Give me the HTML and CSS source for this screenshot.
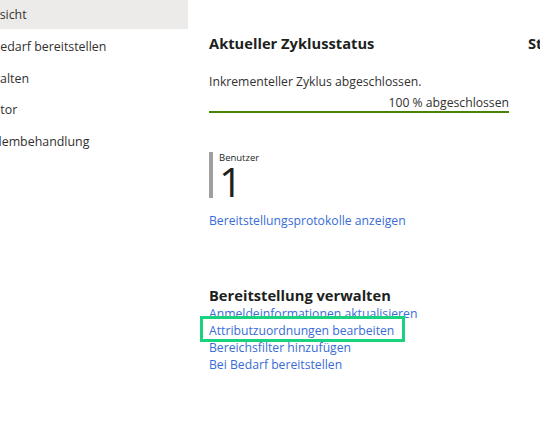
FILE: index.html
```html
<!DOCTYPE html>
<html lang="de">
<head>
    <meta charset="UTF-8">
    <meta name="viewport" content="width=device-width, initial-scale=1.0">
    <title>Bereitstellung - Übersicht</title>
    <link rel="stylesheet" href="styles.css">
</head>
<body>
    <div class="page">
        <nav class="sidebar">
            <a class="nav-item active" href="#">Übersicht</a>
            <a class="nav-item" href="#">Bei Bedarf bereitstellen</a>
            <a class="nav-item" href="#">Verwalten</a>
            <a class="nav-item" href="#">Monitor</a>
            <a class="nav-item" href="#">Problembehandlung</a>
        </nav>

        <main class="main">
            <section class="col">
                <h2 class="col-title">Aktueller Zyklusstatus</h2>
                <p class="status-text">Inkrementeller Zyklus abgeschlossen.</p>
                <div class="progress-label">100 % abgeschlossen</div>
                <div class="progress"><div class="progress-fill" style="width: 100%"></div></div>

                <div class="stat-card">
                    <div class="stat-label">Benutzer</div>
                    <div class="stat-value">1</div>
                </div>

                <a class="link logs-link" href="#">Bereitstellungsprotokolle anzeigen</a>

                <h2 class="col-title manage-title">Bereitstellung verwalten</h2>
                <ul class="link-list">
                    <li><a class="link" href="#">Anmeldeinformationen aktualisieren</a></li>
                    <li><a class="link highlighted" href="#">Attributzuordnungen bearbeiten</a></li>
                    <li><a class="link" href="#">Bereichsfilter hinzufügen</a></li>
                    <li><a class="link" href="#">Bei Bedarf bereitstellen</a></li>
                </ul>
            </section>

            <section class="col">
                <h2 class="col-title">Statistiken bis zum Datum</h2>
            </section>
        </main>
    </div>
</body>
</html>
```

FILE: styles.css
```css
body {
    margin: 0;
    font-family: "Open Sans", "Noto Sans", Arial, sans-serif;
    font-size: 12.2px;
    color: #323130;
    background: #fff;
    overflow: hidden;
}

.page {
    display: flex;
    height: 438px;
}

/* left menu, scrolled so its start is cut off */
.sidebar {
    flex: none;
    width: 188px;
    overflow: hidden;
    display: flex;
    flex-direction: column;
    margin-top: -1px;
}

.nav-item {
    display: block;
    height: 31.8px;
    line-height: 31.8px;
    margin-left: -29px;
    white-space: nowrap;
    font-size: 12.4px;
    color: #323130;
    text-decoration: none;
}

.nav-item.active {
    background: #edebe9;
    height: 30px;
    line-height: 32px;
}

.nav-item.active + .nav-item {
    margin-top: 1.8px;
}

.main {
    flex: 1;
    display: flex;
    gap: 19px;
    padding-left: 21px;
    min-width: 0;
}

.col {
    flex: none;
    width: 300px;
}

.col-title {
    margin: 33px 0 0;
    font-size: 14.7px;
    line-height: 20px;
    font-weight: 700;
    color: #201f1e;
    white-space: nowrap;
}

.status-text {
    margin: 20px 0 0;
    line-height: 18px;
}

.progress-label {
    margin-top: 4px;
    line-height: 16px;
    text-align: right;
}

.progress {
    height: 2px;
    background: #edebe9;
}

.progress-fill {
    height: 100%;
    background: #498205;
}

.stat-card {
    margin-top: 39px;
    border-left: 4px solid #a19f9d;
    padding-left: 6px;
    height: 46px;
    box-sizing: border-box;
}

.stat-label {
    font-size: 9.5px;
    line-height: 11px;
    color: #201f1e;
}

.stat-value {
    font-size: 41px;
    line-height: 36px;
    font-weight: 500;
    color: #201f1e;
}

.link {
    color: #3a6cd6;
    text-decoration: none;
}

.logs-link {
    display: block;
    margin-top: 14px;
    line-height: 18px;
}

.manage-title {
    margin-top: 55px;
}

.link-list {
    list-style: none;
    margin: 0;
    padding: 0;
}

.link-list li {
    line-height: 17px;
}

.link-list .link {
    display: block;
    white-space: nowrap;
}

/* green focus box drawn over the neighbouring rows */
.link.highlighted {
    position: relative;
    width: 205px;
    box-sizing: border-box;
    margin: -6px 0 -3px -9px;
    padding: 3px 0 0 6px;
    border: 3px solid #19d37f;
    background: #fff;
}
```
